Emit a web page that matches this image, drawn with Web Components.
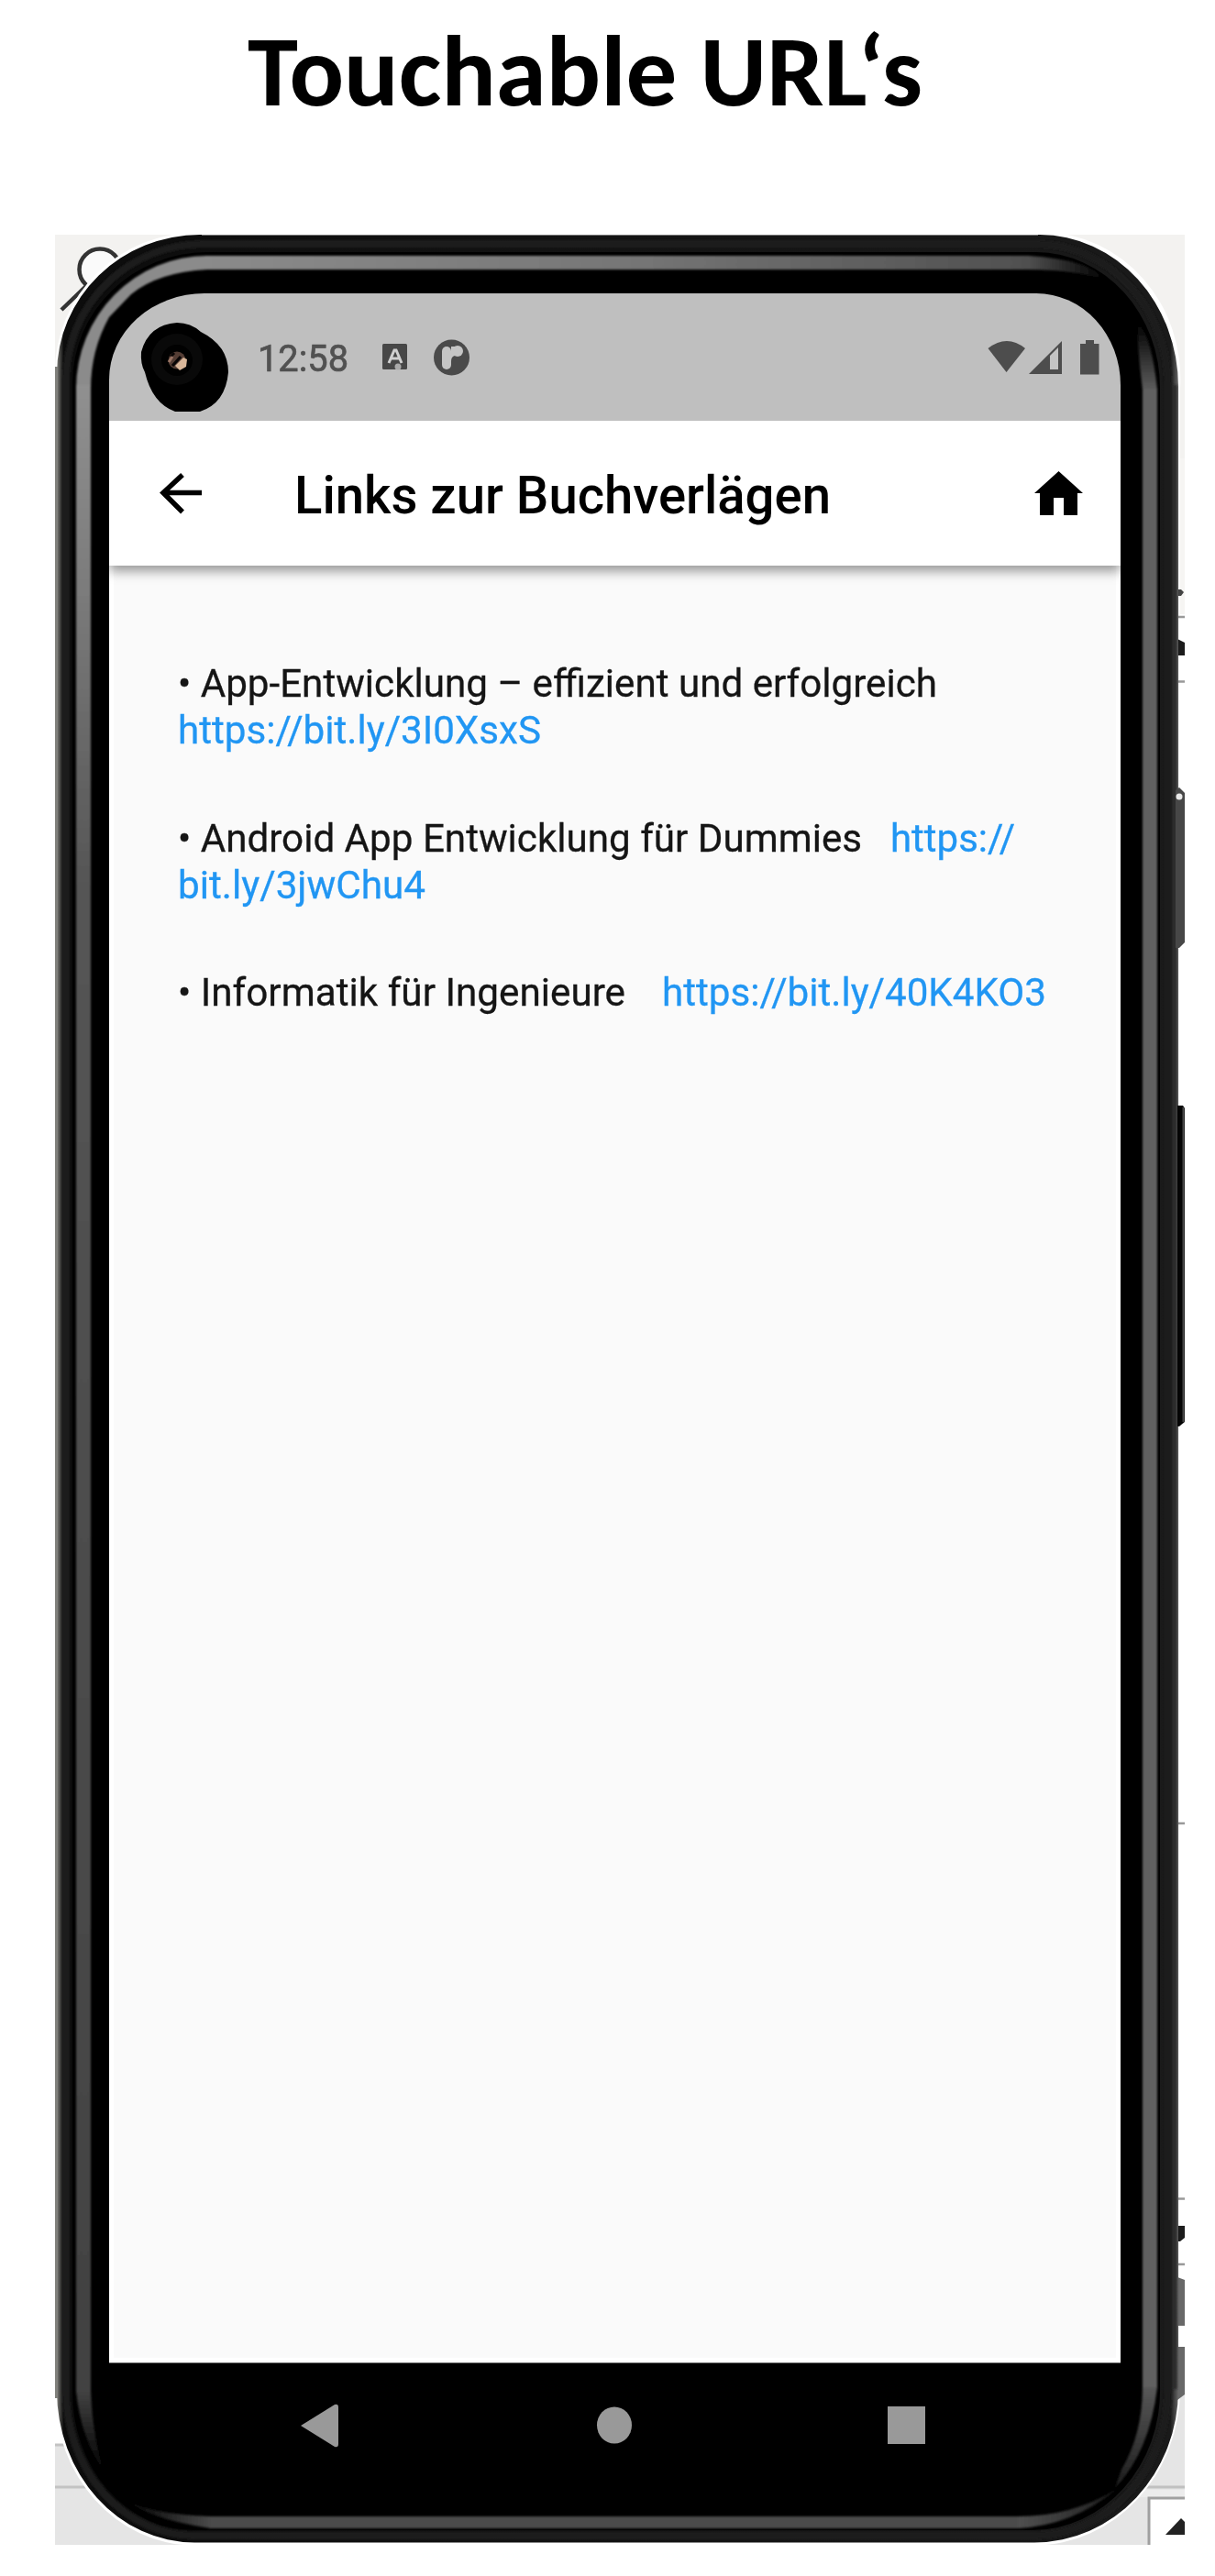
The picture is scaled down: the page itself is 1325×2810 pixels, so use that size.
<!DOCTYPE html>
<html lang="de"><head><meta charset="utf-8"><title>Touchable URL‘s</title>
<style>html,body{margin:0;background:#fff}body{width:1325px;height:2810px;overflow:hidden;font-family:Roboto,sans-serif}</style></head>
<body><url-slide></url-slide>
<script>
const define=(name,html,ready)=>customElements.define(name,class extends HTMLElement{
  connectedCallback(){ if(this.shadowRoot)return; this.attachShadow({mode:'open'}).innerHTML=html; if(ready)ready(this); }
});

// Text stretched horizontally to a fixed line width
define('fit-text',`<style>:host{display:block;white-space:pre;flex:none}span{display:inline-block;transform-origin:0 50%}</style><span><slot></slot></span>`,el=>{
  const w=+el.getAttribute('width'), s=el.shadowRoot.querySelector('span');
  el.style.width=w+'px';
  s.style.transform='scaleX('+w/s.getBoundingClientRect().width+')';
});

define('phone-shell',`<style>
:host{display:block;position:relative;width:1232px;height:2520px}
svg{position:absolute;left:0;top:0}
.screen{position:relative;box-sizing:border-box;padding:64px 70px 0 59px;height:100%;display:flex;flex-direction:column}
</style>
<svg width="1232" height="2520" viewBox="60 256 1232 2520">
<defs>
<linearGradient id="l" x1="0" y1="0" x2="0" y2="1"><stop offset="0" stop-color="#909090"/><stop offset=".1" stop-color="#7c7c7c"/><stop offset=".25" stop-color="#555"/><stop offset="1" stop-color="#424242"/></linearGradient>
<linearGradient id="t"><stop offset="0" stop-color="#8b8b8b"/><stop offset=".5" stop-color="#777"/><stop offset="1" stop-color="#505050"/></linearGradient>
<linearGradient id="ftr"><stop offset="0" stop-color="#505050"/><stop offset="1" stop-color="#000"/></linearGradient>
<linearGradient id="ftr2" x1="0" y1="0" x2="0" y2="1"><stop offset="0" stop-color="#000"/><stop offset="1" stop-color="#5c5c5c"/></linearGradient>
<linearGradient id="fbl" x1="0" y1="0" x2="0" y2="1"><stop offset="0" stop-color="#424242"/><stop offset="1" stop-color="#000"/></linearGradient>
<linearGradient id="fbl2"><stop offset="0" stop-color="#000"/><stop offset="1" stop-color="#4a4a4a"/></linearGradient>
<linearGradient id="fbr" x1="0" y1="0" x2="0" y2="1"><stop offset="0" stop-color="#585858"/><stop offset="1" stop-color="#1c1c1c"/></linearGradient>
<linearGradient id="fbr2"><stop offset="0" stop-color="#505050"/><stop offset="1" stop-color="#1c1c1c"/></linearGradient>
<linearGradient id="edge"><stop offset="0" stop-color="#7d7d78"/><stop offset=".006" stop-color="#0c0c0c"/><stop offset=".993" stop-color="#1a1a1a"/><stop offset="1" stop-color="#666"/></linearGradient>
<filter id="b" filterUnits="userSpaceOnUse" x="60" y="256" width="1232" height="2520"><feGaussianBlur stdDeviation="1.3"/></filter>
</defs>
<rect x="60" y="256" width="170" height="170" fill="#f3f2f0"/><rect x="1120" y="256" width="172" height="380" fill="#f3f2f0"/>
<rect x="1280" y="500" width="12" height="170" fill="#f6f5f3"/>
<circle cx="109" cy="294" r="22.500" fill="#fafafa" stroke="#333" stroke-width="4.500"/><path d="M95 311L67 338" stroke="#333" stroke-width="4.500"/>
<rect x="60" y="2620" width="200" height="45" fill="#fff"/><rect x="60" y="2666" width="240" height="110" fill="#e5e5e5"/><path d="M60 2667h60M60 2713h70" stroke="#c3c3c3" stroke-width="3"/>
<rect x="1080" y="2612" width="212" height="164" fill="#e5e5e5"/><path d="M1240 2713h52" stroke="#c0c0c0" stroke-width="3"/><rect x="1240" y="2716" width="52" height="8" fill="#ececec"/>
<path d="M1253 2776v-51h39v51z" fill="#fff"/><path d="M1253 2776v-51h39" fill="none" stroke="#a0a0a0" stroke-width="3"/><path d="M1271 2765L1288 2747L1292 2751V2765z" fill="#222"/>
<path d="M216 253.500H1138A150 160 0 0 1 1287 424V2606A159 171 0 0 1 1128 2776.500H210A152 166 0 0 1 60 2610V406A156 152 0 0 1 216 253.500z" fill="#fff"/>
<path d="M1284 643l4 0 3 3-3 4h-4z" fill="#444"/><path d="M1284 673h8M1284 743.500h8M1284 1989h8M1284 2398.500h8M1284 2470h8" stroke="#999" stroke-width="2.500"/>
<path d="M1284 697l8 4v14h-8zM1284 2428h8v13l-5 4h-3z" fill="#1c1c1c"/>
<path d="M1284 2484l8 3v50h-8zM1284 2560h8v52l-8 6z" fill="#686868"/>
<path d="M218 256H1134A151 166 0 0 1 1285 422V2606A157 167 0 0 1 1128 2773.500H212A150 166 0 0 1 62 2607V408A156 152 0 0 1 218 256z" fill="url(#edge)"/>
<path d="M220 256.500H1132" stroke="#777"/>
<path d="M60.500 400V2616M62 400V2616" stroke="#80807c" stroke-width="2"/>
<g filter="url(#b)"><path d="M222 266H1130A144 156 0 0 1 1274 424V2604A146 161 0 0 1 1128 2766H212A140 158 0 0 1 72 2607V414A150 149 0 0 1 222 266z" fill="none" stroke="#1e1e1e" stroke-width="8"/><path d="M1281 420V2606" stroke="#2b2b2b" stroke-width="5"/></g>
<path d="M226 275H1130A136 148 0 0 1 1265 424V2604A139 152 0 0 1 1126 2760H212A132 150 0 0 1 79 2607V418A147 143 0 0 1 226 275z" fill="#000"/>
<path d="M1282 862l4-3 6 6v163l-6 6h-4z" fill="#474747"/><circle cx="1286" cy="869" r="3.500" fill="#e8e8e8"/>
<path d="M1284 1206h6l2 3v342l-6 5h-2z" fill="#050505"/><path d="M1290.500 1208v343" stroke="#4a4a4a" stroke-width="2"/>
<g filter="url(#b)">
<path d="M83 424A143 145 0 0 1 226 279H1121V294H226Q172 297 143 321L119 346Q99 382 99 424z" fill="#8b8b8b"/>
<rect x="224" y="279" width="898" height="15" fill="url(#t)"/>
<rect x="83" y="420" width="16" height="2190" fill="url(#l)"/>
<rect x="1246" y="424" width="16" height="2180" fill="#606060"/>
<path d="M1121 279Q1188 283 1205 305Q1170 294 1121 294z" fill="url(#ftr)"/>
<path d="M1262 425Q1256 367 1241 352Q1239 367 1246 425z" fill="url(#ftr2)"/>
<path d="M83 2608H99Q101 2660 114 2697Q88 2660 83 2608z" fill="url(#fbl)"/>
<rect x="228" y="2745" width="882" height="13" fill="#4b4b4b"/>
<path d="M230 2758Q162 2748 136 2726Q164 2743 230 2745z" fill="url(#fbl2)"/>
<path d="M1262 2604Q1254 2674 1216 2714L1223 2694Q1246 2655 1246 2604z" fill="url(#fbr)"/>
<path d="M1110 2758Q1170 2755 1218 2715Q1170 2745 1110 2745z" fill="url(#fbr2)"/>
</g>
</svg>
<div class="screen"><slot></slot></div>`);

define('status-bar',`<style>
:host{display:flex;align-items:center;box-sizing:border-box;height:139px;padding:1px 23px 0 162px;background:#bfbfbf;color:#515151;font-size:40px;border-radius:104px 92px 0 0/94px 100px 0 0;position:relative}
.cam{position:absolute;left:33px;top:31px}.i{margin-left:36px}.r{margin-left:auto;display:block}fit-text{line-height:47px;position:relative;top:1px;-webkit-text-stroke:.7px #515151}
</style>
<svg class="cam" width="98" height="99" viewBox="152 351 98 99"><path d="M193 352Q208 352 219 362Q249 377 249 406Q246 440 218 449H191Q166 440 158 406Q153 397 154 384Q162 354 193 352z" fill="#000"/><circle cx="193" cy="392" r="28" fill="#090909"/><circle cx="193" cy="393" r="17" fill="#010101"/><circle cx="193" cy="393" r="9.500" fill="#543d34"/><path d="M191 399l9-9 4 2-1 8-7 4z" fill="#d9b699"/><path d="M186 389l4-4M188 399l9-10" stroke="#080505" stroke-width="3"/><path d="M184 395l4-6" stroke="#987464" stroke-width="3"/></svg>
<fit-text width="99">12:58</fit-text>
<svg class="i" width="96" height="40" viewBox="416 370 96 40"><rect x="417" y="375" width="27" height="28" rx="1.500" fill="#474747"/><path d="M424 396l6-14h2l6 14M426 391h10" fill="none" stroke="#d0d0d0" stroke-width="3"/><circle cx="434" cy="400" r="3.500" fill="#aaa"/><circle cx="492.500" cy="390" r="19.500" fill="#4a4a4a"/><rect x="482" y="378" width="10" height="25" rx="5" fill="#c5c5c5"/><circle cx="499" cy="383" r="6" fill="#c5c5c5"/><path d="M492 378h7v10h-3q-4 1-4 6z" fill="#c5c5c5"/></svg>
<svg class="r" width="122" height="38" viewBox="1077 371 122 38"><path d="M1077.500 380Q1098 364 1118 380L1097.500 406z" fill="#4d4d4d"/><path d="M1122 408L1158 372V408z" fill="#4d4d4d"/><path d="M1145 388L1154 379V403H1145z" fill="#c4c4c4"/><path d="M1178 375h6v-4h9v4h5.500v33.500h-20.500z" fill="#4d4d4d"/></svg>`);

define('app-bar',`<style>:host{display:flex;align-items:center;box-sizing:border-box;height:158px;padding:0 41px 0 54px;background:#fff;color:#000;font-weight:500;font-size:57px;position:relative;z-index:1;box-shadow:0 6px 12px #0006;clip-path:inset(0 0 -24px 0)}
fit-text{margin-left:100px;line-height:66px;position:relative;top:3px}.h{margin-left:auto}</style>
<svg width="48" height="46" viewBox="173 515 48 46"><path d="M220 537.500H179M199 518L178 537.500L199 558.500" fill="none" stroke="#000" stroke-width="5.500"/></svg>
<fit-text width="585">Links zur Buchverlägen</fit-text>
<svg class="h" width="54" height="50" viewBox="1127 512 54 50"><path d="M1154.500 513L1181 537H1175V561H1160V542H1149V561H1134V537H1128z" fill="#000"/></svg>`);

define('link-list',`<style>:host{display:block;flex:none;box-sizing:border-box;height:1960px;background:#fafafa;border:5px solid #fff;border-top:0;padding:103px 0 0 70px;font-size:42px;line-height:51px;color:#151515;-webkit-text-stroke:.3px}
.item{height:168.500px}.row{display:flex}.u{color:#2196f3}.gap{margin-left:31px}.wide{margin-left:40px}</style>
<div class="item"><fit-text width="828">• App-Entwicklung – effizient und erfolgreich</fit-text><fit-text class="u" width="396">https://bit.ly/3I0XsxS</fit-text></div>
<div class="item"><div class="row"><fit-text width="746">• Android App Entwicklung für Dummies</fit-text><fit-text class="u gap" width="136">https://</fit-text></div><fit-text class="u" width="270">bit.ly/3jwChu4</fit-text></div>
<div class="item"><div class="row"><fit-text width="488">• Informatik für Ingenieure</fit-text><fit-text class="u wide" width="419">https://bit.ly/40K4KO3</fit-text></div></div>`);

define('nav-bar',`<style>:host{display:flex;height:136px;align-items:center;padding-left:209px;gap:279px;border-top:1px solid #777;box-sizing:border-box}svg{flex:none}</style>
<svg width="42" height="48" viewBox="0 0 42 48"><path d="M0 24L37 1Q41 0 41 4V44Q41 48 37 47z" fill="#999"/></svg>
<svg width="40" height="42" viewBox="0 0 40 42"><ellipse cx="21" cy="20.500" rx="19" ry="20" fill="#999"/></svg>
<svg width="42" height="42" viewBox="0 0 42 42"><rect width="41" height="41" fill="#999"/></svg>`);

define('url-slide',`<style>:host{display:flex;flex-direction:column;width:1325px;height:2810px}
header{height:256px;box-sizing:border-box;padding:19px 0 0 270px;font:700 110px/118px Carlito,Lato,sans-serif;color:#000}phone-shell{margin-left:60px}</style>
<header><fit-text width="736">Touchable URL‘s</fit-text></header>
<phone-shell><status-bar></status-bar><app-bar></app-bar><link-list></link-list><nav-bar></nav-bar></phone-shell>`);
</script></body></html>
